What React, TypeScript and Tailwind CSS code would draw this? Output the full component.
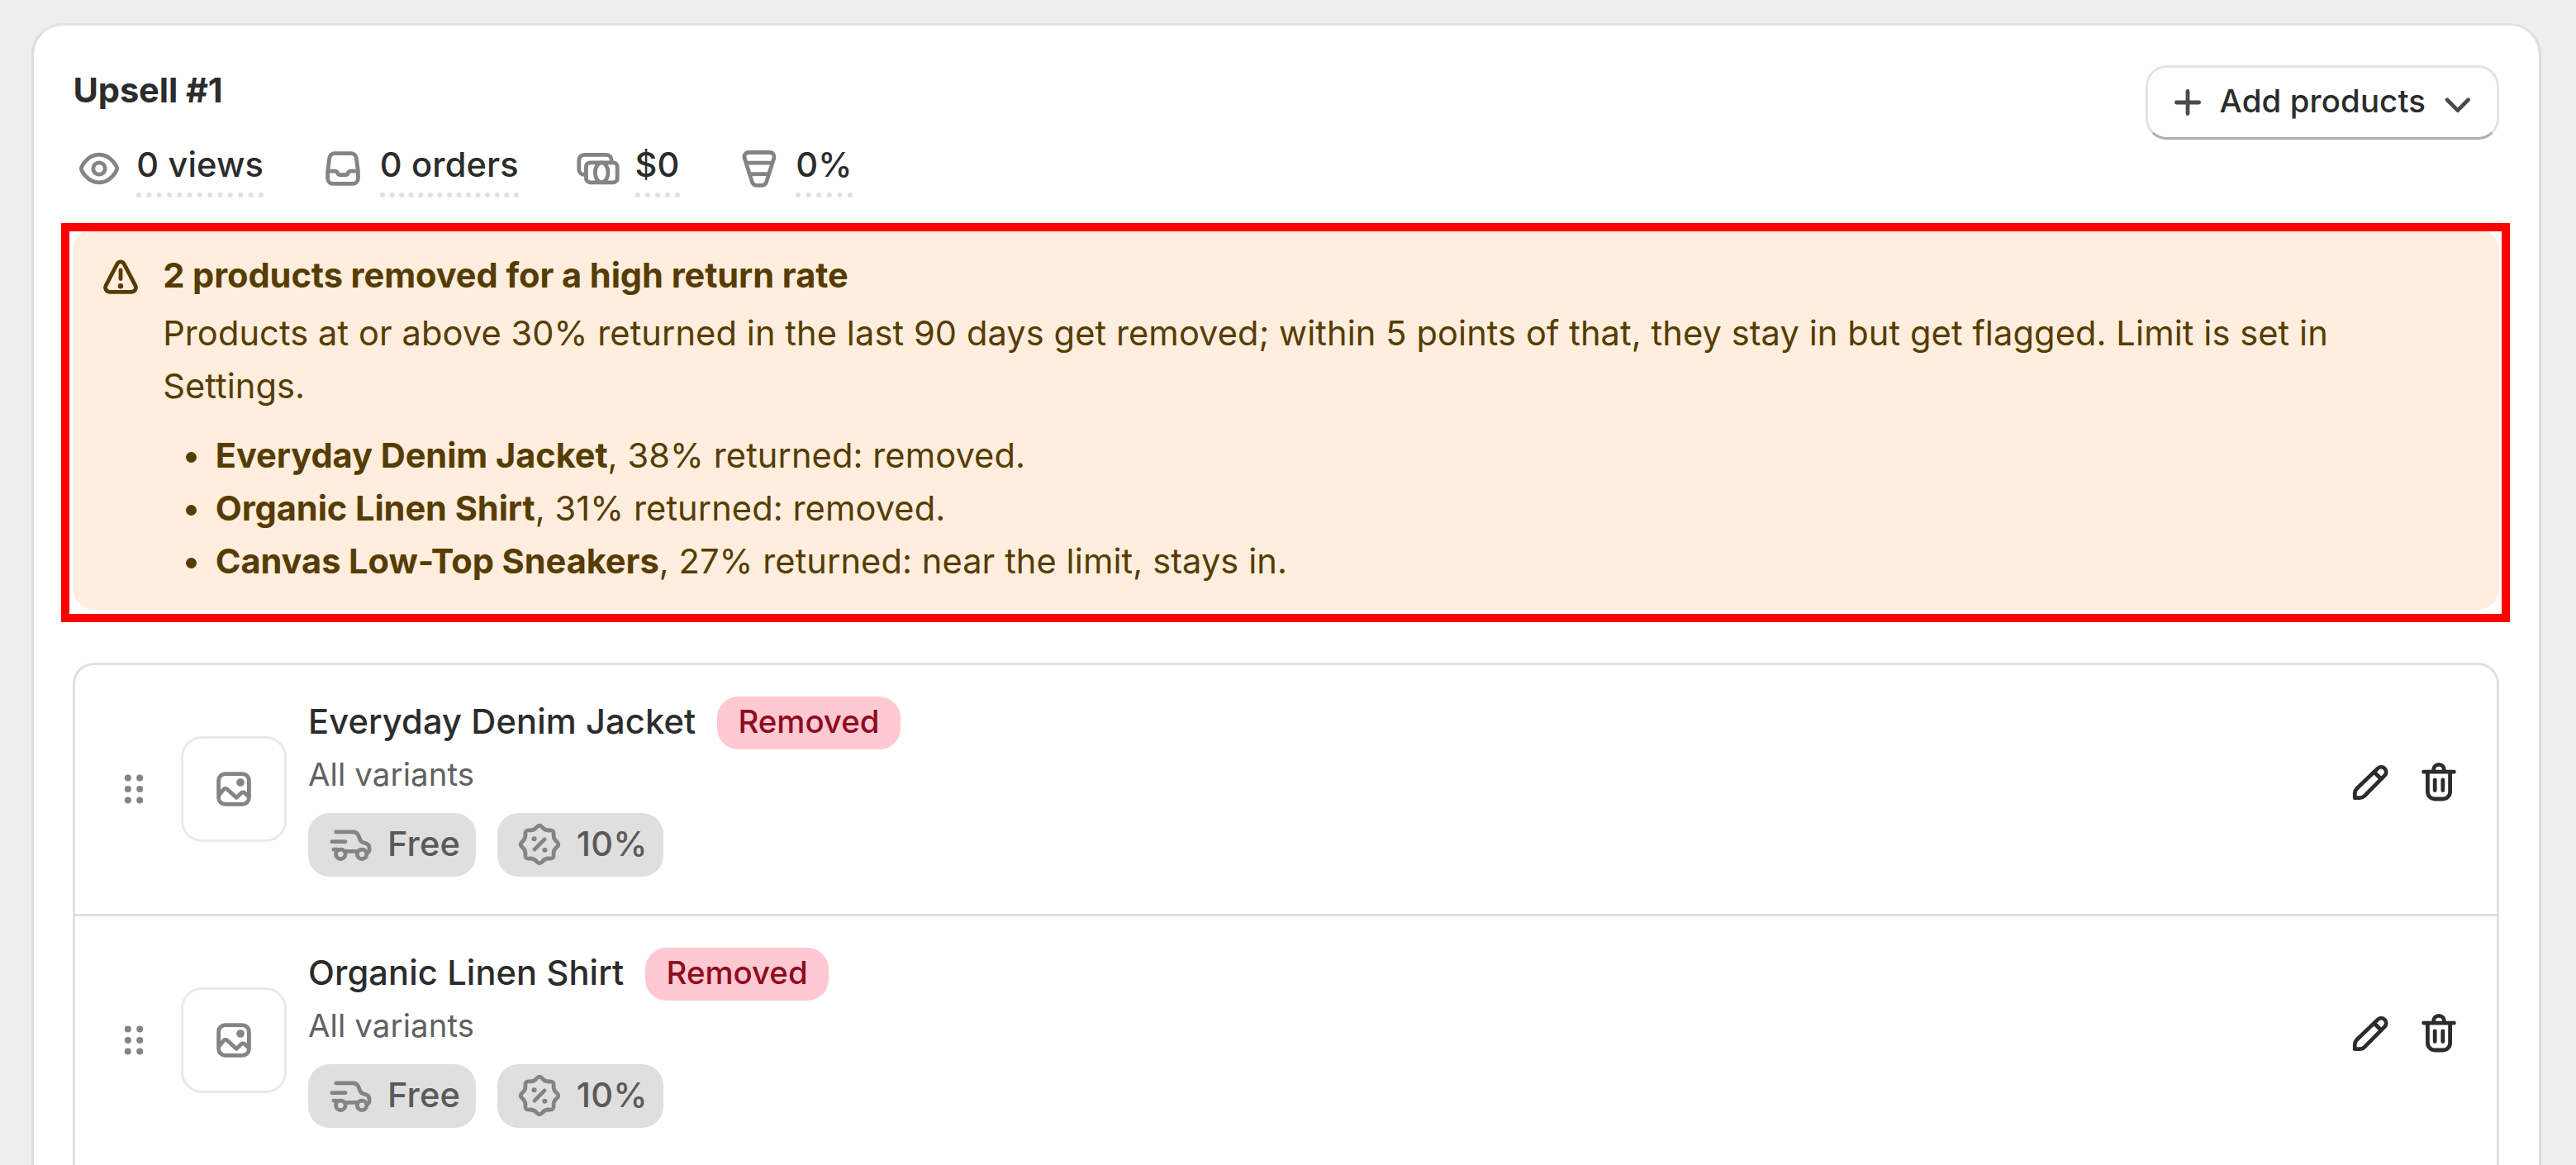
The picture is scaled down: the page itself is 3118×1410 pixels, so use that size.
import React from 'react';

interface Product {
  id: number;
  title: string;
  variants: string;
  status: string;
  shipping: string;
  discount: string;
}

const products: Product[] = [
  { id: 1, title: 'Everyday Denim Jacket', variants: 'All variants', status: 'Removed', shipping: 'Free', discount: '10%' },
  { id: 2, title: 'Organic Linen Shirt', variants: 'All variants', status: 'Removed', shipping: 'Free', discount: '10%' },
];

const returns = [
  { name: 'Everyday Denim Jacket', note: ', 38% returned: removed.' },
  { name: 'Organic Linen Shirt', note: ', 31% returned: removed.' },
  { name: 'Canvas Low-Top Sneakers', note: ', 27% returned: near the limit, stays in.' },
];

// Wavy outline of the discount badge, eight lobes around (10, 10)
const badgePath = (() => {
  const pts = Array.from({ length: 16 }, (_, i) => {
    const r = i % 2 === 0 ? 7.8 : 5.6;
    const a = (i * Math.PI) / 8;
    return [10 + r * Math.cos(a), 10 + r * Math.sin(a)];
  });
  const mid = (i: number) => {
    const p = pts[i % 16];
    const q = pts[(i + 1) % 16];
    return `${((p[0] + q[0]) / 2).toFixed(2)} ${((p[1] + q[1]) / 2).toFixed(2)}`;
  };
  return `M${mid(15)}` + pts.map((p, i) => `Q${p[0].toFixed(2)} ${p[1].toFixed(2)} ${mid(i)}`).join('') + 'Z';
})();

const Icon: React.FC<{ className?: string; children: React.ReactNode }> = ({ className = '', children }) => (
  <svg
    viewBox="0 0 20 20"
    fill="none"
    stroke="currentColor"
    strokeWidth="1.5"
    strokeLinecap="round"
    strokeLinejoin="round"
    className={`size-16 shrink-0 ${className}`}
  >
    {children}
  </svg>
);

const ViewIcon = () => (
  <Icon className="text-[#848484]">
    <circle cx="10" cy="10" r="2.25" />
    <path d="M10 4.75c-2.24 0-3.93 1.1-5.03 2.3-.55.6-.99 1.22-1.29 1.77-.27.5-.43.93-.43 1.18s.16.68.43 1.18c.3.55.74 1.17 1.29 1.77 1.1 1.2 2.79 2.3 5.03 2.3s3.93-1.1 5.03-2.3c.55-.6.99-1.22 1.29-1.77.27-.5.43-.93.43-1.18s-.16-.68-.43-1.18c-.3-.55-.74-1.17-1.29-1.77-1.1-1.2-2.79-2.3-5.03-2.3Z" />
  </Icon>
);

const OrderIcon = () => (
  <Icon className="text-[#848484]">
    <path d="M6.9 4.25h6.2a2 2 0 0 1 1.98 1.75l.62 4.6q.05.4.05.8v2.35a2 2 0 0 1-2 2h-7.5a2 2 0 0 1-2-2v-2.35q0-.4.05-.8l.62-4.6a2 2 0 0 1 1.98-1.75Z" />
    <path d="M4.4 11h2.7c.35 0 .65.2.8.5l.2.35c.15.35.5.55.85.55h2.1c.35 0 .7-.2.85-.55l.2-.35c.15-.3.45-.5.8-.5h2.7" />
  </Icon>
);

const CashIcon = () => (
  <Icon className="text-[#848484]">
    <path d="M5.2 12.3h-.45a2 2 0 0 1-2-2v-3.5a2 2 0 0 1 2-2h8.3a2 2 0 0 1 2 2v.8" />
    <rect x="5.45" y="7.75" width="11.8" height="7.5" rx="1.5" />
    <ellipse cx="11.3" cy="11.5" rx="2.45" ry="3.75" />
  </Icon>
);

const FunnelIcon = () => (
  <Icon className="text-[#848484]">
    <path d="M6 3.9h8a1.65 1.65 0 0 1 1.58 2.12l-2.9 9.1a1.8 1.8 0 0 1-1.7 1.25h-1.96a1.8 1.8 0 0 1-1.7-1.25l-2.9-9.1a1.65 1.65 0 0 1 1.58-2.12Z" />
    <path d="M5.2 7.85h9.6M6.6 12.1h6.8" />
  </Icon>
);

const PlusIcon = () => (
  <Icon className="text-[#4a4a4a]">
    <path d="M10 5.75v8.5M5.75 10h8.5" />
  </Icon>
);

const ChevronDownIcon = () => (
  <Icon className="text-[#4a4a4a]">
    <path d="m6.25 9 4 4 4-4" />
  </Icon>
);

const AlertIcon = () => (
  <Icon>
    <path d="M8.75 5.05a1.43 1.43 0 0 1 2.5 0l4.3 8.2a1.7 1.7 0 0 1-1.5 2.5h-8.1a1.7 1.7 0 0 1-1.5-2.5Z" />
    <path d="M10 7.5v3.3" />
    <circle cx="10" cy="13.5" r="1" fill="currentColor" stroke="none" />
  </Icon>
);

const DragIcon = () => (
  <Icon className="text-[#848484]">
    <g fill="currentColor" stroke="none">
      {[5.8, 10, 14.2].map((cy) => (
        <React.Fragment key={cy}>
          <circle cx="7.75" cy={cy} r="1.25" />
          <circle cx="12.25" cy={cy} r="1.25" />
        </React.Fragment>
      ))}
    </g>
  </Icon>
);

const ImageIcon = () => (
  <Icon className="text-[#848484]">
    <rect x="4.25" y="4.25" width="11.5" height="11.5" rx="2.5" />
    <path d="m4.5 12.2 1.6-2.05a1 1 0 0 1 1.45-.1l3.45 3.2 1.8-1.75a1 1 0 0 1 1.35 0l1.45 1.35" />
    <circle cx="12.5" cy="7.5" r="1.5" fill="currentColor" stroke="none" />
  </Icon>
);

const TruckIcon = () => (
  <Icon className="text-[#848484]">
    <path d="M4.6 5.3h6.5c.85 0 1.6.5 1.95 1.3l.8 1.95c.1.3.35.5.65.6l1.4.45c.75.25 1.3.95 1.3 1.75v.6c0 .5-.25.95-.65 1.2" />
    <path d="M3.1 8.95h5M3.7 11.9h1.2M8.2 12.6h4.4" />
    <circle cx="6.35" cy="13.7" r="1.8" />
    <circle cx="14.4" cy="13.7" r="1.8" />
  </Icon>
);

const DiscountIcon = () => (
  <Icon className="text-[#848484]">
    <path d={badgePath} />
    <path d="m8.1 11.9 3.8-3.8" />
    <circle cx="8" cy="7.9" r="0.95" fill="currentColor" stroke="none" />
    <circle cx="12" cy="12.1" r="0.95" fill="currentColor" stroke="none" />
  </Icon>
);

const EditIcon = () => (
  <Icon>
    <path d="M4.15 15.85v-1.75a2.5 2.5 0 0 1 .73-1.77l7.9-7.6a1.87 1.87 0 0 1 2.65 2.65l-7.65 7.75a2.5 2.5 0 0 1-1.77.72Z" />
    <path d="m11.5 6.1 2.5 2.5" />
  </Icon>
);

const DeleteIcon = () => (
  <Icon>
    <path d="M4.25 6h11.5M8 6v-.75a2 2 0 0 1 4 0v.75" />
    <path d="M5.75 6v7.5a2.75 2.75 0 0 0 2.75 2.75h3a2.75 2.75 0 0 0 2.75-2.75v-7.5" />
    <path d="M8.5 9v4M11.5 9v4" />
  </Icon>
);

const Stat: React.FC<{ icon: React.ReactNode; label: string }> = ({ icon, label }) => (
  <div className="flex items-center gap-[12.8px]">
    {icon}
    <span className="border-b-[6px] border-dotted border-[#e0e0e0] pb-[3px] leading-[61px] font-medium tracking-[0.003em]">{label}</span>
  </div>
);

const Tag: React.FC<{ icon: React.ReactNode; label: string }> = ({ icon, label }) => (
  <span className="flex h-[77px] items-center gap-[12.8px] rounded-[25.6px] bg-[#dfdfdf] px-[19.2px] font-medium tracking-[0.003em] text-[#5a5a5a]">
    {icon}
    <span className="pb-[3px]">{label}</span>
  </span>
);

const ProductRow: React.FC<{ product: Product }> = ({ product }) => (
  <div className="flex h-[304px] items-center gap-[25.6px] border-b-[3px] border-[#e0e0e0] px-[38.4px]">
    <DragIcon />
    <div className="flex size-32 shrink-0 items-center justify-center rounded-[25.6px] border-[3px] border-[#e9e9e9]">
      <ImageIcon />
    </div>
    <div className="flex-1 pb-[6.4px]">
      <div className="flex items-center gap-[25.6px] leading-[61px]">
        <span className="pb-[3px] font-medium tracking-[0.003em]">{product.title}</span>
        <span className="rounded-[25.6px] bg-[#fec9d1] px-[25.6px] pb-[3px] text-[38.4px] font-medium text-[#8e0b21]">
          {product.status}
        </span>
      </div>
      <div className="pb-[3px] text-[38.4px] leading-[61px] tracking-[0.003em] text-[#616161]">{product.variants}</div>
      <div className="mt-[12.8px] flex gap-[25.6px]">
        <Tag icon={<TruckIcon />} label={product.shipping} />
        <Tag icon={<DiscountIcon />} label={product.discount} />
      </div>
    </div>
    <div className="mb-4 flex gap-[19.2px]">
      <button><EditIcon /></button>
      <button><DeleteIcon /></button>
    </div>
  </div>
);

const App: React.FC = () => {
  return (
    <div className="h-[1410px] overflow-hidden bg-[#eeeeee] pr-[42px] pl-[38px] pt-7 font-['Inter',sans-serif] text-[41.6px] leading-16 text-[#2c2c2c]">
      <div className="h-[1500px] rounded-t-[38px] border-[3px] border-[#dcdcdc] border-t-[#e3e3e3] bg-white pr-[47.6px] pl-[47.4px] pt-12">
        <div className="flex items-start justify-between">
          <div>
            <h2 className="pb-[3px] leading-[61px] font-bold tracking-[-0.002em]">Upsell #1</h2>
            <div className="mt-[25.6px] flex gap-16">
              <Stat icon={<ViewIcon />} label="0 views" />
              <Stat icon={<OrderIcon />} label="0 orders" />
              <Stat icon={<CashIcon />} label="$0" />
              <Stat icon={<FunnelIcon />} label="0%" />
            </div>
          </div>
          <button className="flex h-[89.6px] items-center gap-[6.4px] rounded-[25.6px] border-[3px] border-[#e3e3e3] border-b-[#aeaeae] px-4 text-[38.4px] font-medium tracking-[0.003em]">
            <PlusIcon />
            <span className="pb-1">Add products</span>
            <ChevronDownIcon />
          </button>
        </div>

        {/* Return rate warning */}
        <div className="relative mt-[38.4px] flex gap-[19.2px] rounded-[25.6px] bg-[#ffeedd] p-[25.6px] text-[#563c00]">
          <div className="absolute -top-[7px] -right-[12.5px] -bottom-[15px] -left-[14px] border-[10px] border-[#ff0000]"></div>
          <AlertIcon />
          <div className="-mt-[1.6px] mb-[1.6px]">
            <h3 className="font-bold tracking-[-0.002em]">2 products removed for a high return rate</h3>
            <p className="mt-[6.4px] w-[2720px] tracking-[0.002em]">
              Products at or above 30% returned in the last 90 days get removed; within 5 points of that, they stay in but get flagged. Limit is set in Settings.
            </p>
            <ul className="mt-[19.2px] pl-7 tracking-[0.002em]">
              {returns.map((item) => (
                <li key={item.name} className="flex items-center gap-[23px]">
                  <span className="mt-[6px] size-[12.6px] rounded-full bg-[#563c00]"></span>
                  <span>
                    <b className="font-bold tracking-[-0.002em]">{item.name}</b>
                    {item.note}
                  </span>
                </li>
              ))}
            </ul>
          </div>
        </div>

        <div className="mt-16 rounded-t-[25.6px] border-[3px] border-b-0 border-[#e0e0e0]">
          {products.map((product) => (
            <ProductRow key={product.id} product={product} />
          ))}
        </div>
      </div>
    </div>
  );
};

export default App;
